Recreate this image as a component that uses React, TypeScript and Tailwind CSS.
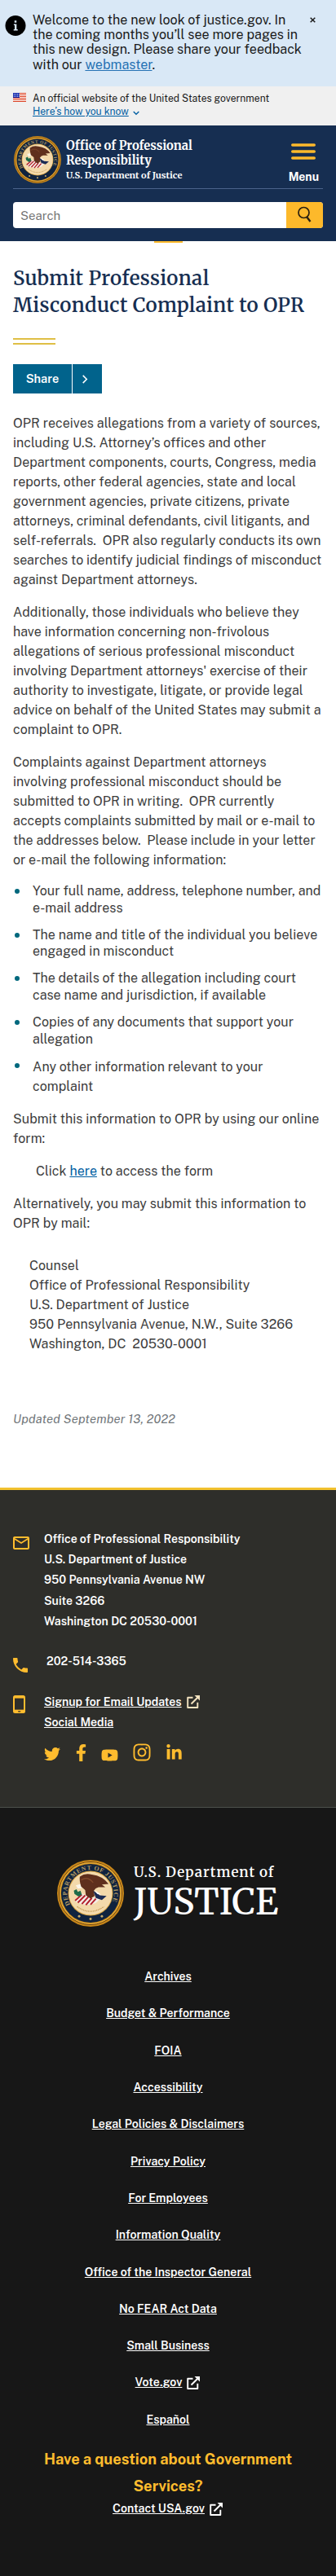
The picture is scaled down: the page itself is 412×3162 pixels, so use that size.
import { FaFacebookF, FaInstagram, FaLinkedinIn, FaTwitter, FaYoutube } from 'react-icons/fa';
import { MdMailOutline, MdPhone } from 'react-icons/md';

function Seal({ size, id }: { size: string; id: string }) {
  return (
    <svg viewBox="0 0 100 100" className={'shrink-0 ' + size}>
      <defs>
        <path id={id} d="M19.5 67 A35 35 0 1 1 80.5 67" />
      </defs>
      <circle cx="50" cy="50" r="50" fill="#c8871a" />
      <circle cx="50" cy="50" r="47" fill="none" stroke="#6b4311" strokeWidth="1.2" />
      <circle cx="50" cy="50" r="45.5" fill="none" stroke="#e3ab3a" strokeWidth="1.6" />
      <circle cx="50" cy="50" r="44" fill="#10233f" />
      <circle cx="50" cy="50" r="33.5" fill="#d9a441" />
      <circle cx="50" cy="50" r="32.3" fill="#f3d9ab" />
      <text fontSize="9.5" fontWeight="700" fill="#b39a63" className="font-['Liberation_Serif',serif]">
        <textPath href={'#' + id} textLength="140">DEPARTMENT OF JUSTICE</textPath>
      </text>
      <path d="M27 62 Q29 56 36 50 L52 56 L64 58 Q60 66 49 67 Q36 68 27 62Z" fill="#f4ede6" />
      <path d="M27 61 L37 52 M31 64 L42 53 M37 66 L47 55 M43 67.5 L52 57 M50 67 L58 58" stroke="#b3202c" strokeWidth="2.4" />
      <path d="M25 46 L29 44 L31 48 L35 46 L37 52 L32 55 L26 51Z" fill="#1d6b4a" />
      <path d="M28 38 L35 36 L37 42 L31 43Z" fill="#fbf5ea" />
      <path d="M34 25 Q42 19 52 22 Q68 24 77 36 L67 37 L72 41 L62 41 Q57 42 55 46 L56 54 L50 58 L43 53 L42 45 L36 40 Q33 31 34 25Z" fill="#5f2f1d" />
      <path d="M36 30 Q46 24 54 34" fill="none" stroke="#824a2c" strokeWidth="1.5" />
      <path d="M54 46 L64 53 L74 54 L67 60 L58 57Z" fill="#1c2c55" />
      <path d="M56 45 L66 52 L60 51Z" fill="#fff" />
      <path d="M30 70 Q50 84 70 70" fill="none" stroke="#c49a55" strokeWidth="1.6" strokeDasharray="1.5 1" />
      <g fill="#c9ab6a">
        <circle cx="33" cy="84.5" r="1.8" />
        <circle cx="50" cy="88.5" r="1.8" />
        <circle cx="67" cy="84.5" r="1.8" />
      </g>
    </svg>
  );
}

function External({ className = '' }: { className?: string }) {
  return (
    <svg viewBox="0 0 18 18" className={'h-[18px] w-[18px] shrink-0 ' + className} fill="none" stroke="currentColor">
      <path d="M8.5 3.7H2.2V16H14.3V9.7" strokeWidth="1.9" strokeLinejoin="round" />
      <path d="M6.5 11.5L14.5 3.5" strokeWidth="1.9" />
      <path d="M10.5 1H17V7.5Z" fill="currentColor" stroke="none" />
    </svg>
  );
}

function Para({ lines, className = '' }: { lines: string[]; className?: string }) {
  return (
    <p className={'whitespace-pre ' + className}>
      {lines.map((line) => (
        <span key={line} className="block">{line}</span>
      ))}
    </p>
  );
}

const items = [
  ['Your full name, address, telephone number, and', 'e-mail address'],
  ['The name and title of the individual you believe', 'engaged in misconduct'],
  ['The details of the allegation including court', 'case name and jurisdiction, if available'],
  ['Copies of any documents that support your', 'allegation'],
];

const links = [
  'Archives',
  'Budget & Performance',
  'FOIA',
  'Accessibility',
  'Legal Policies & Disclaimers',
  'Privacy Policy',
  'For Employees',
  'Information Quality',
  'Office of the Inspector General',
  'No FEAR Act Data',
  'Small Business',
  'Vote.gov',
  'Español',
];

function Banner() {
  return (
    <section className="flex h-[106px] bg-[#d9e8f6] pt-[15.5px] text-[#1b1b1b]">
      <svg viewBox="0 0 24 24" className="mt-[3px] ml-[6px] h-[25px] w-[26px] shrink-0">
        <circle cx="12" cy="12" r="12" fill="#000" />
        <path d="M10.8 6h2.4v2.3h-2.4zM10 10h3.3v6.3H14.6V17.8H9.8V16.3H11V11.5H10z" fill="#d9e8f6" />
      </svg>
      <p className="ml-2 w-[336px] shrink-0 text-[16.1px] leading-[18.4px] whitespace-nowrap">
        Welcome to the new look of justice.gov. In
        <br />
        the coming months you’ll see more pages in
        <br />
        this new design. Please share your feedback
        <br />
        with our <a href="#" className="text-[#2672b4] underline">webmaster</a>.
      </p>
      <svg viewBox="0 0 8 8" className="mt-[5px] ml-[4px] h-[7px] w-[7px]" stroke="#1b1b1b" strokeWidth="1.7">
        <path d="M.8.8l6.4 6.4M7.2.8L.8 7.2" />
      </svg>
    </section>
  );
}

function GovBanner() {
  return (
    <section className="flex h-12 bg-[#f0f0f0] pt-2">
      <svg viewBox="0 0 16 11" className="ml-4 h-[11px] w-4 shrink-0">
        <rect width="16" height="11" fill="#fff" />
        <path d="M0 .5h16M0 2.5h16M0 4.5h16M0 6.5h16M0 8.5h16M0 10.5h16" stroke="#db3e1f" />
        <rect width="8" height="6" fill="#1e33b1" />
        <path d="M1 1.5h7M1 3h7M1 4.5h7" stroke="#fff" strokeWidth=".6" strokeDasharray="1 1" />
      </svg>
      <div className="ml-2 text-[12.16px] leading-[16px] text-[#1b1b1b]">
        <p className="-mt-[1px] whitespace-nowrap">An official website of the United States government</p>
        <div className="flex items-center">
          <a href="#" className="text-[#005ea2] underline">Here’s how you know</a>
          <svg viewBox="0 0 9 6" className="mt-[3px] ml-[5px] h-[6px] w-[8px]" fill="none" stroke="#005ea2" strokeWidth="1.5">
            <path d="M.8.8L4.5 4.5L8.2.8" />
          </svg>
        </div>
      </div>
    </section>
  );
}

function Header() {
  return (
    <header className="relative h-[142px] bg-[#162e51] px-4 pt-[13px] text-white">
      <div className="flex h-[65px] border-b border-[#4a628a]">
        <Seal size="ml-[1px] h-[58px] w-[58px]" id="header-seal" />
        <div className="ml-[6px] pt-[3px] font-['Merriweather','Noto_Serif',serif] font-bold whitespace-nowrap">
          <p className="text-[14.7px] leading-[18.4px]">Office of Professional<br />Responsibility</p>
          <p className="text-[11.1px] leading-[17px]">U.S. Department of Justice</p>
        </div>
        <button className="mr-[5px] ml-auto flex flex-col items-center pt-[9px]">
          <svg viewBox="0 0 30 20" className="h-5 w-[30px]" stroke="#fdb92b" strokeWidth="3.6" strokeLinecap="round">
            <path d="M1.8 2h26.4M1.8 10h26.4M1.8 18h26.4" />
          </svg>
          <span className="mt-[11px] text-[14px] leading-[20px] font-bold">Menu</span>
        </button>
      </div>
      <div className="mt-[16px] flex h-8 overflow-hidden rounded-[4px] bg-white">
        <input type="text" placeholder="Search" className="min-w-0 flex-1 px-[9px] pt-[2px] text-[15px] placeholder-[#757575] outline-none" />
        <button className="flex w-[45px] justify-center bg-[#fdb92b] pt-[5px]">
          <svg viewBox="0 0 18 20" className="-ml-[2px] h-[20px] w-[18px]" fill="none" stroke="#2b2110" strokeWidth="1.7">
            <circle cx="8.5" cy="8" r="6.5" />
            <path d="M12 13l4.5 6" strokeWidth="2.3" />
          </svg>
        </button>
      </div>
      <div className="absolute top-[142px] left-[189px] h-[2px] w-[35px] bg-[#fdb92b]" />
    </header>
  );
}

function Content() {
  return (
    <main className="h-[1530px] px-4 pt-[29px] text-[16px] leading-[24px] tracking-[0.035px]">
      <h1 className="font-['Merriweather','Noto_Serif',serif] text-[24px] leading-[33px] font-semibold tracking-[0.33px] whitespace-nowrap text-[#162e51]">
        Submit Professional
        <br />
        Misconduct Complaint to OPR
      </h1>
      <div className="mt-[24px] h-[8px] w-[52px] border-y-2 border-[#dfbf45]" />
      <button className="mt-[24px] flex h-9 w-[109px] bg-[#01638c] text-white">
        <span className="w-[72px] pt-[6px] text-center text-[14.5px] font-semibold">Share</span>
        <span className="flex h-full flex-1 items-center border-l border-white pl-[11px]">
          <svg viewBox="0 0 8 12" className="h-[11px] w-[8px]" fill="none" stroke="#fff" strokeWidth="1.7">
            <path d="M1.5 1l5 5l-5 5" />
          </svg>
        </span>
      </button>
      <Para
        className="mt-[25px]"
        lines={[
          'OPR receives allegations from a variety of sources,',
          'including U.S. Attorney’s offices and other',
          'Department components, courts, Congress, media',
          'reports, other federal agencies, state and local',
          'government agencies, private citizens, private',
          'attorneys, criminal defendants, civil litigants, and',
          'self-referrals.  OPR also regularly conducts its own',
          'searches to identify judicial findings of misconduct',
          'against Department attorneys.',
        ]}
      />
      <Para
        className="mt-4"
        lines={[
          'Additionally, those individuals who believe they',
          'have information concerning non-frivolous',
          'allegations of serious professional misconduct',
          "involving Department attorneys' exercise of their",
          'authority to investigate, litigate, or provide legal',
          'advice on behalf of the United States may submit a',
          'complaint to OPR.',
        ]}
      />
      <Para
        className="mt-4"
        lines={[
          'Complaints against Department attorneys',
          'involving professional misconduct should be',
          'submitted to OPR in writing.  OPR currently',
          'accepts complaints submitted by mail or e-mail to',
          'the addresses below.  Please include in your letter',
          'or e-mail the following information:',
        ]}
      />
      <ul className="mt-4 flex flex-col gap-3">
        {items.map((item) => (
          <li key={item[0]} className="flex leading-[20.8px]">
            <span className="mt-[7px] ml-[2px] h-[6px] w-[6px] shrink-0 rounded-full bg-[#00687d]" />
            <Para className="ml-4" lines={item} />
          </li>
        ))}
        <li className="flex">
          <span className="mt-[7px] ml-[2px] h-[6px] w-[6px] shrink-0 rounded-full bg-[#00687d]" />
          <Para className="ml-4" lines={['Any other information relevant to your', 'complaint']} />
        </li>
      </ul>
      <Para className="mt-4" lines={['Submit this information to OPR by using our online', 'form:']} />
      <p className="mt-4 pl-7">
        Click <a href="#" className="text-[#005ea2] underline">here</a> to access the form
      </p>
      <Para className="mt-4" lines={['Alternatively, you may submit this information to', 'OPR by mail:']} />
      <Para
        className="mt-7 pl-5"
        lines={[
          'Counsel',
          'Office of Professional Responsibility',
          'U.S. Department of Justice',
          '950 Pennsylvania Avenue, N.W., Suite 3266',
          'Washington, DC  20530-0001',
        ]}
      />
      <p className="mt-[68px] text-[14.88px] tracking-[0.16px] text-[#71767a] italic">Updated September 13, 2022</p>
    </main>
  );
}

function Contact() {
  return (
    <section className="h-[393px] border-t-[3px] border-b border-t-[#f2c12e] border-b-[#4d504c] bg-[#2e2e2a] px-4 pt-[48px] text-[14.08px] leading-[25.2px] font-semibold text-white">
      <div className="flex">
        <MdMailOutline className="mt-[5px] -ml-[2px] h-6 w-6 shrink-0 text-[#ffbc2e]" />
        <Para
          className="ml-4"
          lines={['Office of Professional Responsibility', 'U.S. Department of Justice', '950 Pennsylvania Avenue NW', 'Suite 3266', 'Washington DC 20530-0001']}
        />
      </div>
      <div className="mt-6 flex">
        <MdPhone className="mt-[5px] -ml-[3px] h-6 w-6 shrink-0 text-[#ffbc2e]" />
        <p className="ml-5">202-514-3365</p>
      </div>
      <div className="mt-[21px] flex">
        <svg viewBox="0 0 15 22" className="mt-[4px] h-[22px] w-[15px] shrink-0">
          <rect width="15" height="22" rx="2.5" fill="#ffbc2e" />
          <rect x="2" y="3.6" width="11" height="14" fill="#2e2e2a" />
          <rect x="6" y="19.2" width="3.4" height="1.2" rx=".6" fill="#2e2e2a" />
        </svg>
        <div className="ml-[23px]">
          <div className="flex items-center gap-[5px]">
            <a href="#" className="underline">Signup for Email Updates</a>
            <External className="-mt-[2px] text-[#f3e3c0]" />
          </div>
          <a href="#" className="block w-fit underline">Social Media</a>
          <div className="mt-[11px] flex h-6 items-end text-[#ffbc2e]">
            <FaTwitter className="-mb-[1px] h-[20px] w-[20px]" />
            <FaFacebookF className="ml-[15px] h-[21px] w-[21px]" />
            <FaYoutube className="-mb-[3px] ml-[14px] h-[21px] w-[21px]" />
            <FaInstagram className="-mb-[1px] ml-[17px] h-[24px] w-[24px]" />
            <FaLinkedinIn className="ml-[17px] h-[21px] w-[21px]" />
          </div>
        </div>
      </div>
    </section>
  );
}

function Footer() {
  return (
    <footer className="flex h-[943px] flex-col items-center bg-[#171717] pt-[64px] text-[14.08px] leading-[25.2px] font-semibold text-white">
      <div className="flex w-[272px]">
        <Seal size="h-[82px] w-[82px]" id="footer-seal" />
        <div className="ml-[12px] pt-[3px] font-['Merriweather','Noto_Serif',serif] font-medium whitespace-nowrap">
          <p className="text-[17px] leading-[24px] font-semibold tracking-[0.95px]">U.S. Department of</p>
          <p className="mt-[1px] text-[44px] leading-[48px]">JUSTICE</p>
        </div>
      </div>
      <ul className="mt-[49px] flex flex-col items-center gap-[20.12px]">
        {links.map((link) => (
          <li key={link} className="flex items-center gap-[5px]">
            <a href="#" className="underline">{link}</a>
            {link === 'Vote.gov' && <External />}
          </li>
        ))}
      </ul>
      <h2 className="mt-[19px] w-[330px] text-center text-[18.3px] leading-[33px] font-bold text-[#ffbc2e]">
        Have a question about Government Services?
      </h2>
      <p className="-mt-[1px] flex items-center gap-[5px]">
        <a href="#" className="underline">Contact USA.gov</a>
        <External />
      </p>
    </footer>
  );
}

export default function App() {
  return (
    <div className="w-full overflow-hidden bg-white font-['Public_Sans','Inter',sans-serif] text-[#3d3d3d]">
      <Banner />
      <GovBanner />
      <Header />
      <Content />
      <Contact />
      <Footer />
    </div>
  );
}
